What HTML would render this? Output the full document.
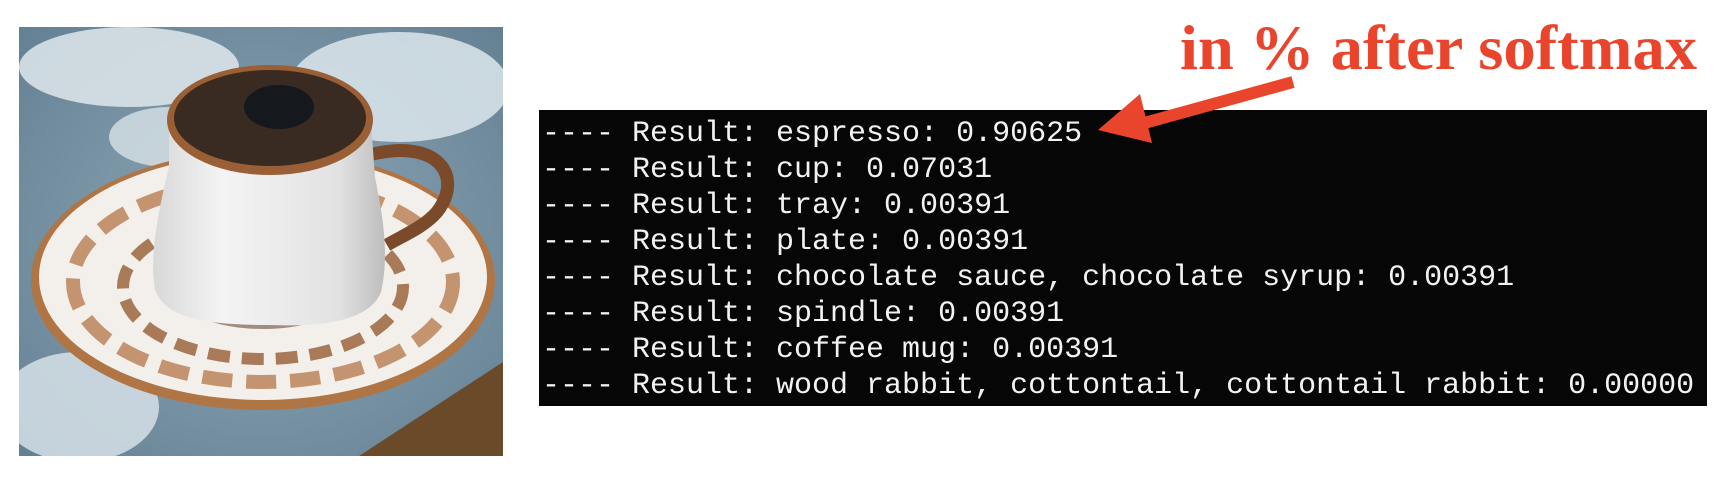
<!DOCTYPE html>
<html><head><meta charset="utf-8">
<style>
html,body{margin:0;padding:0;background:#fff;}
body{width:1734px;height:490px;position:relative;overflow:hidden;}
#term{position:absolute;left:539px;top:110px;width:1168px;height:296px;background:#060606;z-index:1;}
#term pre{margin:0;position:absolute;left:3px;top:6px;font-family:"Liberation Mono",monospace;font-size:30px;line-height:36px;color:#f2f2f2;}
svg{position:absolute;left:0;top:0;z-index:2;}
</style></head><body>
<svg width="1734" height="490" viewBox="0 0 1734 490">
  <defs>
    <radialGradient id="bg" cx="0.5" cy="0.5" r="0.8">
      <stop offset="0" stop-color="#8fa9b8"/><stop offset="1" stop-color="#5e7b8e"/>
    </radialGradient>
    <linearGradient id="cup" x1="0" x2="1">
      <stop offset="0" stop-color="#d8d8d8"/><stop offset="0.3" stop-color="#f4f4f4"/><stop offset="0.8" stop-color="#e2e2e2"/><stop offset="1" stop-color="#bdbdbd"/>
    </linearGradient>
    <clipPath id="pc"><rect x="0" y="0" width="484" height="429"/></clipPath>
  </defs>
  <g transform="translate(19,27)" clip-path="url(#pc)">
    <rect width="484" height="429" fill="url(#bg)"/>
    <ellipse cx="110" cy="40" rx="110" ry="40" fill="#dfe7ec" opacity="0.85"/>
    <ellipse cx="380" cy="60" rx="110" ry="55" fill="#dce6ec" opacity="0.85"/>
    <ellipse cx="60" cy="380" rx="80" ry="55" fill="#d6e1e8" opacity="0.85"/>
    <ellipse cx="150" cy="110" rx="60" ry="30" fill="#e6ecef" opacity="0.7"/>
    <polygon points="340,429 484,335 484,429" fill="#6b4a2a"/>
    <ellipse cx="244" cy="253" rx="232" ry="130" fill="#b07545"/>
    <ellipse cx="244" cy="250" rx="224" ry="123" fill="#f3efea"/>
    <ellipse cx="244" cy="255" rx="190" ry="100" fill="none" stroke="#c49470" stroke-width="14" stroke-dasharray="30 14"/>
    <ellipse cx="244" cy="260" rx="140" ry="72" fill="none" stroke="#a87a58" stroke-width="12" stroke-dasharray="22 12"/>
    <ellipse cx="244" cy="262" rx="90" ry="40" fill="#6a4a36" opacity="0.6"/>
    <path d="M350 128 C420 110 445 150 418 185 C405 200 385 208 368 218" fill="none" stroke="#7a4a2a" stroke-width="13"/>
    <path d="M150 95 L352 95 L356 150 C365 195 370 230 362 265 C350 295 300 300 250 298 C190 298 145 292 136 262 C130 230 140 180 150 140 Z" fill="url(#cup)"/>
    <ellipse cx="251" cy="93" rx="103" ry="55" fill="#9a5f34"/>
    <ellipse cx="251" cy="91" rx="96" ry="48" fill="#3a2b22"/>
    <ellipse cx="260" cy="80" rx="35" ry="22" fill="#15181c"/>
  </g>
  <text x="1180" y="69" textLength="517" lengthAdjust="spacingAndGlyphs" font-family="Liberation Serif, serif" font-weight="bold" font-size="64" fill="#e8452c">in % after softmax</text>
  <line x1="1293" y1="82" x2="1130" y2="127" stroke="#e8452c" stroke-width="12"/>
  <polygon points="1098,130 1140,94 1152,143" fill="#e8452c"/>
</svg>
<div id="term"><pre>---- Result: espresso: 0.90625
---- Result: cup: 0.07031
---- Result: tray: 0.00391
---- Result: plate: 0.00391
---- Result: chocolate sauce, chocolate syrup: 0.00391
---- Result: spindle: 0.00391
---- Result: coffee mug: 0.00391
---- Result: wood rabbit, cottontail, cottontail rabbit: 0.00000</pre></div>
</body></html>
